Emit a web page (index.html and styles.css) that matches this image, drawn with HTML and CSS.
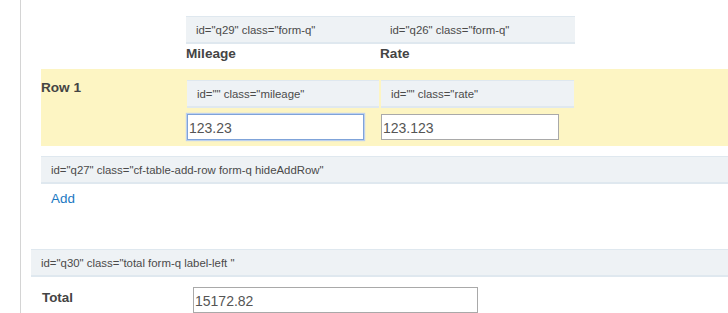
FILE: index.html
```html
<!DOCTYPE html>
<html>
<head>
<meta charset="utf-8">
<link rel="stylesheet" href="styles.css">
</head>
<body>
<div class="page">
  <div class="table-q">
    <div class="head-row">
      <div class="label-col"></div>
      <div class="col col-a">
        <div class="qbar">id="q29" class="form-q"</div>
        <div class="col-label">Mileage</div>
      </div>
      <div class="col col-b">
        <div class="qbar">id="q26" class="form-q"</div>
        <div class="col-label">Rate</div>
      </div>
    </div>
    <div class="data-row">
      <div class="label-col row-label">Row 1</div>
      <div class="cell cell-a">
        <div class="qbar">id="" class="mileage"</div>
        <input class="field focused" type="text" value="123.23">
      </div>
      <div class="cell cell-b">
        <div class="qbar">id="" class="rate"</div>
        <input class="field" type="text" value="123.123">
      </div>
    </div>
    <div class="qbar wide">id="q27" class="cf-table-add-row form-q hideAddRow"</div>
    <a class="add-link">Add</a>
  </div>
  <div class="qbar wide total-bar">id="q30" class="total form-q label-left "</div>
  <div class="total-row">
    <div class="total-label">Total</div>
    <input class="field total-field" type="text" value="15172.82">
  </div>
</div>
</body>
</html>
```
FILE: styles.css
```css
html, body {
  margin: 0;
  padding: 0;
  background: #fff;
  font-family: "Liberation Sans", Arial, sans-serif;
  color: #444;
  overflow: hidden;
}
.page {
  margin-left: 20px;
  border-left: 1px solid #d4d4d4;
  height: 313px;
  padding-left: 10px;
}
.table-q {
  padding-left: 10px;
  padding-top: 16px;
}
.qbar {
  box-sizing: border-box;
  height: 28px;
  background: #eef2f5;
  border-top: 1px solid #dfe8ef;
  border-bottom: 2px solid #dfe8ef;
  font-size: 11.4px;
  color: #4a4a4a;
  padding-left: 10px;
  display: flex;
  align-items: center;
  white-space: nowrap;
}
.head-row {
  display: flex;
}
.label-col {
  width: 145px;
  flex: none;
}
.col-a { width: 194px; }
.col-b { width: 195px; }
.col-label {
  font-weight: bold;
  font-size: 13.6px;
  color: #444;
  padding-top: 2px;
  height: 23px;
}
.data-row {
  display: flex;
  background: #fdf5c3;
  height: 77px;
  box-sizing: border-box;
  padding-top: 11px;
}
.row-label {
  font-weight: bold;
  font-size: 13.6px;
  color: #444;
  padding-top: 0;
}
.cell-a { width: 192px; margin-left: 1px; }
.cell-b { width: 193px; margin-left: 2px; }
.field {
  display: block;
  box-sizing: border-box;
  height: 26px;
  margin-top: 6px;
  border: 1px solid #a9a9a9;
  font-family: "Liberation Sans", Arial, sans-serif;
  font-size: 14px;
  color: #555;
  padding: 2px 1px 0;
  background: #fff;
  outline: none;
}
.cell-a .field { width: 177px; }
.cell-b .field { width: 178px; }
.field.focused {
  border: 1px solid #7fa3d9;
  box-shadow: 0 0 1px 1px #bcd0ee;
  width: 177px;
}
.wide {
  margin-top: 10px;
}
.add-link {
  display: block;
  color: #1a78c2;
  font-size: 13.4px;
  padding-left: 10px;
  padding-top: 7px;
  height: 20px;
}
.total-bar {
  margin-top: 38px;
}
.total-row {
  display: flex;
  padding-top: 10px;
}
.total-label {
  width: 151px;
  padding-left: 11px;
  padding-top: 3px;
  font-weight: bold;
  font-size: 13.4px;
  color: #444;
}
.total-field {
  margin-top: 0;
  width: 285px;
}
```
